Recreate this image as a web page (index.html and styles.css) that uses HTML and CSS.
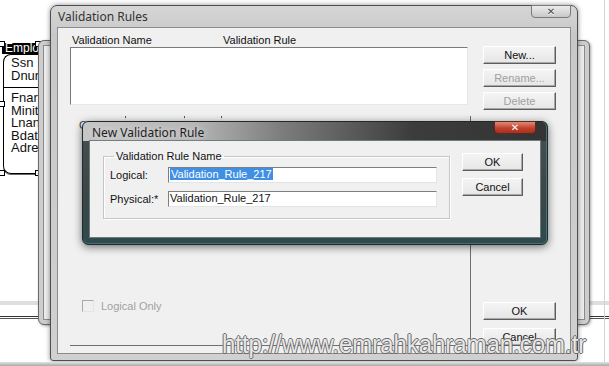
FILE: index.html
```html
<!DOCTYPE html>
<html lang="en">
<head>
  <meta charset="UTF-8">
  <title>Validation Rules</title>
  <link rel="stylesheet" href="styles.css">
</head>
<body>
  <div class="desktop">

    <!-- diagram canvas behind the dialogs -->
    <div class="scrollband"></div>
    <div class="edge-line"></div>

    <div class="entity">
      <div class="entity-head">Emplo</div>
      <div class="entity-body">
        <div class="keys">
          <div>Ssn</div>
          <div>Dnur</div>
        </div>
        <div class="attrs">
          <div>Fnar</div>
          <div>Minit</div>
          <div>Lnan</div>
          <div>Bdat</div>
          <div>Adre</div>
        </div>
      </div>
      <span class="handle h-tl"></span>
      <span class="handle h-tr"></span>
      <span class="handle h-ml"></span>
      <span class="handle h-bl"></span>
      <span class="handle h-br"></span>
    </div>

    <div class="backwin"><div class="backwin-inner"></div></div>

    <!-- Validation Rules dialog -->
    <div class="win main">
      <div class="titlebar">
        <span class="title">Validation Rules</span>
        <span class="close grey">&#x2715;</span>
      </div>
      <div class="client">
        <div class="leftcol">
          <div class="list-head">
            <span class="col-name">Validation Name</span>
            <span class="col-rule">Validation Rule</span>
          </div>
          <div class="listbox"></div>
          <div class="panel">
            <div class="tabs">
              <span class="tab first">G</span>
              <span class="tab second"></span>
              <span class="tab third"></span>
            </div>
            <label class="check disabled"><span class="box"></span>Logical Only</label>
          </div>
        </div>
        <div class="rightcol">
          <button class="btn">New...</button>
          <button class="btn" disabled>Rename...</button>
          <button class="btn" disabled>Delete</button>
          <div class="spacer"></div>
          <button class="btn">OK</button>
          <button class="btn">Cancel</button>
        </div>
      </div>
    </div>

    <!-- New Validation Rule dialog on top -->
    <div class="win aero">
      <div class="titlebar">
        <span class="title">New Validation Rule</span>
        <span class="close red">&#x2715;</span>
      </div>
      <div class="client">
        <fieldset class="group">
          <legend>Validation Rule Name</legend>
          <div class="field">
            <span class="lbl">Logical:</span>
            <span class="input"><span class="sel">Validation_Rule_217</span></span>
          </div>
          <div class="field">
            <span class="lbl">Physical:*</span>
            <span class="input">Validation_Rule_217</span>
          </div>
        </fieldset>
        <div class="btncol">
          <button class="btn">OK</button>
          <button class="btn">Cancel</button>
        </div>
      </div>
    </div>

    <div class="watermark">http://www.emrahkahraman.com.tr</div>
    <div class="shade"></div>
  </div>
</body>
</html>
```

FILE: styles.css
```css
body {
  margin: 0;
  background: #fff;
  font-family: "Liberation Sans", Arial, sans-serif;
  font-size: 11px;
  color: #111;
}
.desktop {
  position: relative;
  width: 609px;
  height: 366px;
  overflow: hidden;
  background: #fff;
}

/* diagram bits */
.scrollband {
  position: absolute;
  left: 0;
  right: 0;
  top: 301px;
  height: 40px;
  border-top: 4px solid #dedede;
  box-sizing: border-box;
}
.scrollband::after {
  content: "";
  display: block;
  margin-top: 11px;
  height: 1px;
  border-top: 1px solid #333;
  border-bottom: 1px solid #555;
}
.edge-line {
  position: absolute;
  left: 604px;
  top: 0;
  width: 1px;
  height: 366px;
  background: #d4d4d4;
}
.entity {
  position: absolute;
  left: 2px;
  top: 43px;
  width: 37px;
  font-size: 13px;
  font-family: "Liberation Sans", Arial, sans-serif;
}
.entity-head {
  background: #000;
  color: #fff;
  height: 11px;
  line-height: 11px;
  padding-left: 3px;
  font-size: 12px;
  overflow: hidden;
  white-space: nowrap;
}
.entity-body {
  border: 1px solid #000;
  border-right: 0;
  border-radius: 8px 0 0 8px;
  height: 118px;
  margin-left: 1px;
  padding-left: 7px;
  box-shadow: 0 1px 0 #666;
  white-space: nowrap;
  overflow: hidden;
}
.keys {
  padding: 2px 0 5px;
  line-height: 12.5px;
  border-bottom: 1px solid #000;
  margin-left: -7px;
  padding-left: 7px;
}
.attrs {
  padding-top: 4px;
  line-height: 12.5px;
}
.handle {
  position: absolute;
  width: 4px;
  height: 4px;
  background: #fff;
  border: 1px solid #000;
}
.h-tl { left: -3px; top: -2px; }
.h-tr { left: 33px; top: -2px; }
.h-ml { left: -3px; top: 58px; }
.h-bl { left: -3px; top: 127px; }
.h-br { left: 33px; top: 127px; }

.backwin {
  position: absolute;
  left: 38px;
  top: 40px;
  width: 552px;
  height: 285px;
  box-sizing: border-box;
  border: 1px solid #6a6a6a;
  border-radius: 6px;
  background: #cdcdcd;
  padding: 4px;
  box-shadow: 1px 1px 3px rgba(0,0,0,.35);
}
.backwin-inner {
  height: 100%;
  border: 1px solid #8a8a8a;
  background: #ececec;
  box-sizing: border-box;
}

/* windows */
.win {
  position: absolute;
  box-sizing: border-box;
  display: flex;
  flex-direction: column;
}
.titlebar {
  position: relative;
  flex: none;
  font-family: "Noto Sans", "Open Sans", sans-serif;
  font-size: 12px;
}
.close {
  position: absolute;
  top: -1px;
  width: 40px;
  height: 13px;
  box-sizing: border-box;
  border-radius: 0 0 4px 4px;
  text-align: center;
  font-size: 10px;
  line-height: 12px;
  font-weight: bold;
  font-family: "DejaVu Sans", sans-serif;
}
.close.grey {
  right: 0;
  background: linear-gradient(#ececec, #c8c8c8);
  border: 1px solid #7a7a7a;
  color: #4a4a4a;
  text-shadow: 0 1px 0 #fff;
}
.close.red {
  right: 5px;
  width: 42px;
  height: 13px;
  background: linear-gradient(#e08a78, #c1412c 55%, #a9301e);
  border: 1px solid #5a2a22;
  color: #fff;
}

.main {
  left: 50px;
  top: 5px;
  width: 528px;
  height: 356px;
  border: 1px solid #4e4e4e;
  border-radius: 7px 7px 3px 3px;
  background: linear-gradient(#d6d6d6, #c8c8c8 30px, #d0d0d0);
  padding: 0 6px 6px;
  box-shadow: 0 0 5px rgba(0,0,0,.45);
}
.main .titlebar {
  height: 21px;
}
.main .title {
  position: absolute;
  left: 1px;
  top: 2px;
  color: #333;
  font-size: 12px;
}
.main .client {
  flex: 1;
  background: #f0f0f0;
  border: 1px solid #8c8c8c;
  display: flex;
  padding: 6px 14px 0 12px;
  gap: 15px;
}
.leftcol {
  width: 398px;
  display: flex;
  flex-direction: column;
}
.list-head {
  height: 13px;
  line-height: 12px;
  position: relative;
}
.col-name { position: absolute; left: 2px; }
.col-rule { position: absolute; left: 153px; }
.listbox {
  height: 58px;
  background: #fff;
  border-top: 1px solid #7a7a7a;
  border-left: 1px solid #7a7a7a;
  border-right: 1px solid #e8e8e8;
  border-bottom: 1px solid #e8e8e8;
  box-sizing: border-box;
}
.panel {
  margin-top: 11px;
  width: 401px;
  height: 230px;
  border-right: 1px solid #707070;
  border-bottom: 1px solid #707070;
  box-sizing: border-box;
  display: flex;
  flex-direction: column;
  justify-content: space-between;
  padding-bottom: 33px;
}
.tabs {
  display: flex;
  height: 14px;
}
.tab {
  box-sizing: border-box;
  height: 14px;
  padding: 3px 0 0 9px;
  border-right: 1px solid #9a9a9a;
  border-image: linear-gradient(#555 0 3px, #e4e4e4 3px) 1;
  color: #444;
  font-size: 11px;
}
.tab.first { width: 56px; }
.tab.second { width: 59px; }
.tab.third { width: 37px; }
.check {
  display: flex;
  align-items: center;
  gap: 7px;
  margin-left: 12px;
}
.check.disabled {
  color: #a2a2a2;
}
.box {
  width: 10px;
  height: 10px;
  border: 1px solid #a9a9a9;
  border-right-color: #e4e4e4;
  border-bottom-color: #e4e4e4;
  background: #f0f0f0;
}
.rightcol {
  width: 74px;
  display: flex;
  flex-direction: column;
  padding-top: 12px;
  padding-bottom: 7px;
  gap: 5px;
}
.rightcol .spacer {
  flex: 1;
}
.rightcol .btn + .btn:last-child {
  margin-top: 3px;
}

.btn {
  height: 18px;
  padding: 0;
  font-family: "Liberation Sans", Arial, sans-serif;
  font-size: 11px;
  color: #111;
  background: linear-gradient(#f4f4f4, #e6e6e6);
  border: 1px solid;
  border-color: #fff #5e5e5e #5e5e5e #fff;
  box-shadow: inset -1px -1px 0 #a8a8a8;
}
.btn:disabled {
  color: #a0a0a0;
}

.aero {
  left: 82px;
  top: 121px;
  width: 466px;
  height: 124px;
  border: 1px solid #1f2a2b;
  border-radius: 6px;
  padding: 0 6px 6px;
  background:
    linear-gradient(to right, #c6c6c6 0, #b6b6b6 110px, #7c7c7c 200px, #3c3c3c 330px, #343434 100%) top / 100% 19px no-repeat,
    linear-gradient(#4a4f50, #3c4647 60%, #2f4a4d);
  box-shadow: 0 2px 9px rgba(0,0,0,.55), inset 0 -1px 0 #3f7075, inset -1px 0 0 #44767a;
}
.aero .titlebar {
  height: 18px;
}
.aero .title {
  position: absolute;
  left: 3px;
  top: 2px;
  color: #1e1e1e;
  text-shadow: 0 0 6px #e8e8e8;
}
.aero .client {
  flex: 1;
  background: #f0f0f0;
  border: 1px solid #6d7b7d;
  display: flex;
  align-items: flex-start;
  padding: 9px 0 0 13px;
}
.group {
  margin: 0;
  width: 347px;
  box-sizing: border-box;
  padding: 5px 12px 11px 5px;
  border: 1px solid #c6c6c6;
  box-shadow: 1px 1px 0 #fff, inset 1px 1px 0 #fff;
}
.group legend {
  padding: 0 2px;
  margin-left: 5px;
  line-height: 12px;
}
.field {
  display: flex;
  align-items: center;
  height: 16px;
}
.field + .field {
  margin-top: 8px;
}
.lbl {
  width: 58px;
  padding-left: 1px;
}
.input {
  flex: 1;
  height: 16px;
  box-sizing: border-box;
  background: #fff;
  border: 1px solid;
  border-color: #7e7e7e #e4e4e4 #e4e4e4 #7e7e7e;
  line-height: 13px;
  padding-left: 1px;
}
.sel {
  background: #3f8fe4;
  color: #fff;
  padding: 0 1px;
}
.btncol {
  display: flex;
  flex-direction: column;
  gap: 7px;
  margin-left: 12px;
  margin-top: 3px;
  width: 61px;
}

.watermark {
  position: absolute;
  left: 222px;
  top: 331px;
  font-family: "Liberation Sans", Arial, sans-serif;
  font-size: 26px;
  line-height: 26px;
  white-space: nowrap;
  color: #e6e6e6;
  transform: scaleX(0.92);
  transform-origin: left top;
  text-shadow: 1px 0 #6a6a6a, -1px 0 #6a6a6a, 0 1px #6a6a6a, 0 -1px #6a6a6a;
}
.shade {
  position: absolute;
  left: 0;
  right: 0;
  bottom: 0;
  height: 4px;
  background: linear-gradient(#e2e2e2, #a9a9a9);
}
```
